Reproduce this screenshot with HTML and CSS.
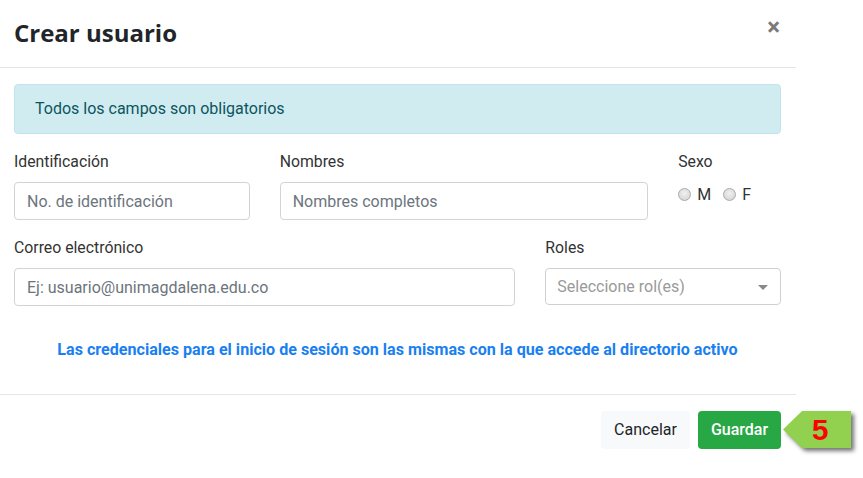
FILE: index.html
```html
<!DOCTYPE html>
<html lang="es">
<head>
<meta charset="utf-8">
<title>Crear usuario</title>
<link rel="stylesheet" href="styles.css">
</head>
<body>
<div class="modal">
  <div class="modal-header">
    <h1 class="modal-title">Crear usuario</h1>
    <span class="close">&times;</span>
  </div>
  <div class="modal-body">
    <div class="alert">Todos los campos son obligatorios</div>
    <div class="grid">
      <div class="group span4">
        <label class="label">Identificación</label>
        <div class="input placeholder">No. de identificación</div>
      </div>
      <div class="group span6">
        <label class="label">Nombres</label>
        <div class="input placeholder">Nombres completos</div>
      </div>
      <div class="group span2">
        <label class="label">Sexo</label>
        <div class="radios">
          <span class="radio"></span><span class="radio-label">M</span>
          <span class="radio"></span><span class="radio-label">F</span>
        </div>
      </div>
      <div class="group span8">
        <label class="label">Correo electrónico</label>
        <div class="input placeholder">Ej: usuario@unimagdalena.edu.co</div>
      </div>
      <div class="group span4">
        <label class="label">Roles</label>
        <div class="select"><span class="select-ph">Seleccione rol(es)</span><span class="caret"></span></div>
      </div>
    </div>
    <p class="note">Las credenciales para el inicio de sesión son las mismas con la que accede al directorio activo</p>
  </div>
  <div class="modal-footer">
    <button class="btn btn-light">Cancelar</button>
    <button class="btn btn-success">Guardar</button>
    <div class="badge-wrap">
      <div class="badge"><span>5</span></div>
    </div>
  </div>
</div>
</body>
</html>
```
FILE: styles.css
```css
* { box-sizing: border-box; }
html, body { margin: 0; padding: 0; background: #fff; }
body {
  font-family: Roboto, "Liberation Sans", Arial, sans-serif;
  color: #212529;
  width: 863px;
  height: 478px;
  overflow: hidden;
}
.modal { width: 796px; }
.modal-header {
  height: 68px;
  border-bottom: 1px solid #e5e5e5;
  display: flex;
  justify-content: space-between;
  align-items: flex-start;
  padding: 0 14px;
}
.modal-title {
  margin: 17px 0 0;
  font-family: "Open Sans", Roboto, sans-serif;
  font-size: 24px;
  font-weight: 700;
  line-height: 32px;
  color: #212529;
}
.close {
  margin-top: 13px;
  margin-right: 2px;
  font-size: 24px;
  font-weight: 700;
  line-height: 28px;
  color: #7a7a7a;
}
.modal-body { padding: 16px 15px 0 14px; }
.alert {
  background: #d1ecf1;
  border: 1px solid #bee5eb;
  color: #0c5460;
  border-radius: 4px;
  height: 50px;
  padding: 12px 20px;
  font-size: 16px;
  line-height: 24px;
  margin-bottom: 16px;
}
.grid {
  display: grid;
  grid-template-columns: repeat(12, 1fr);
  column-gap: 30px;
}
.span2 { grid-column: span 2; }
.span4 { grid-column: span 4; }
.span6 { grid-column: span 6; }
.span8 { grid-column: span 8; }
.group { margin-bottom: 16px; }
.label {
  display: block;
  font-size: 15.8px;
  line-height: 24px;
  margin-bottom: 8px;
  color: #333;
}
.input, .select {
  height: 38px;
  border: 1px solid #ced4da;
  border-radius: 4px;
  padding: 0 12px;
  font-size: 16px;
  line-height: 37px;
}
.placeholder { color: #6c757d; }
.select {
  height: 37px;
  display: flex;
  align-items: center;
  justify-content: space-between;
  padding: 0 12px 0 11px;
  border-color: #d0d0d0;
}
.select-ph { color: #9a9a9a; }
.caret {
  width: 0; height: 0;
  border-left: 5px solid transparent;
  border-right: 5px solid transparent;
  border-top: 5px solid #888;
  margin-top: 2px;
}
.radios {
  display: flex;
  align-items: center;
  height: 24px;
  margin-top: 1px;
  font-size: 16px;
  color: #333;
}
.radio {
  width: 13px; height: 13px;
  border-radius: 50%;
  border: 1px solid #aaa;
  background: radial-gradient(circle at 50% 40%, #f0f0f0, #d0d0d0);
  margin-right: 6px;
}
.radio-label { margin-right: 12px; }
.note {
  margin: 16px 0 0;
  height: 56px;
  text-align: center;
  font-size: 16.1px;
  font-weight: 700;
  color: #1a7ff0;
  line-height: 24px;
  padding-left: 0;
  white-space: nowrap;
}
.modal-footer {
  border-top: 1px solid #e5e5e5;
  margin-top: 0;
  padding: 16px 15px 16px 14px;
  display: flex;
  justify-content: flex-end;
  align-items: center;
  gap: 8px;
  position: relative;
}
.btn {
  height: 38px;
  border: none;
  border-radius: 4px;
  font-family: Roboto, "Liberation Sans", Arial, sans-serif;
  font-size: 16px;
  padding: 0 12px;
  line-height: 38px;
}
.btn-light { background: #f8f9fa; color: #212529; width: 89px; }
.btn-success { background: #28a745; color: #fff; width: 83px; font-weight: 500; }
.badge-wrap {
  position: absolute;
  left: 783px;
  top: 16px;
  filter: drop-shadow(3px 3px 2px rgba(0,0,0,0.55));
}
.badge {
  width: 68px;
  height: 37px;
  background: #92d050;
  clip-path: polygon(0 50%, 28% 0, 100% 0, 100% 100%, 28% 100%);
  display: flex;
  align-items: center;
  justify-content: center;
  padding-left: 6px;
}
.badge span {
  font-family: "Liberation Sans", Arial, sans-serif;
  font-weight: 700;
  font-size: 30px;
  color: #ff0000;
  line-height: 30px;
}
```
